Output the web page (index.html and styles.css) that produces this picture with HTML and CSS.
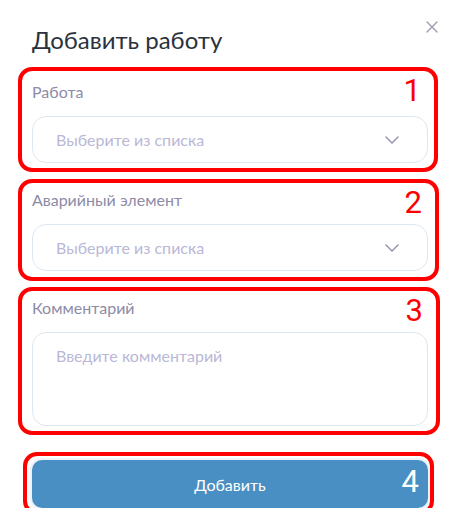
FILE: index.html
```html
<!DOCTYPE html>
<html lang="ru">
<head>
<meta charset="utf-8">
<title>Добавить работу</title>
<link rel="stylesheet" href="styles.css">
</head>
<body>
<div class="modal">
  <button class="close" aria-label="Закрыть">
    <svg width="12" height="12" viewBox="0 0 12 12"><path d="M1 1L11 11M11 1L1 11" stroke="#9c9db4" stroke-width="1.4" fill="none" stroke-linecap="round"/></svg>
  </button>
  <h1 class="title">Добавить работу</h1>

  <div class="field field-1">
    <div class="label">Работа</div>
    <div class="select">
      <span class="placeholder">Выберите из списка</span>
      <svg class="chevron" width="14" height="8" viewBox="0 0 14 8"><path d="M1 1L7 7L13 1" stroke="#8f8fab" stroke-width="1.4" fill="none" stroke-linecap="round" stroke-linejoin="round"/></svg>
    </div>
    <div class="mark mark-1"><span class="num">1</span></div>
  </div>

  <div class="field field-2">
    <div class="label">Аварийный элемент</div>
    <div class="select">
      <span class="placeholder">Выберите из списка</span>
      <svg class="chevron" width="14" height="8" viewBox="0 0 14 8"><path d="M1 1L7 7L13 1" stroke="#8f8fab" stroke-width="1.4" fill="none" stroke-linecap="round" stroke-linejoin="round"/></svg>
    </div>
    <div class="mark mark-2"><span class="num">2</span></div>
  </div>

  <div class="field field-3">
    <div class="label">Комментарий</div>
    <div class="textarea"><span class="placeholder">Введите комментарий</span></div>
    <div class="mark mark-3"><span class="num">3</span></div>
  </div>

  <div class="field field-4">
    <button class="submit">Добавить</button>
    <div class="mark mark-4"><span class="num num-4">4</span></div>
  </div>
</div>
</body>
</html>
```

FILE: styles.css
```css
html, body {
  margin: 0;
  padding: 0;
  background: #ffffff;
  font-family: Lato, "Open Sans", "Liberation Sans", sans-serif;
}

.modal {
  position: relative;
  width: 396px;
  padding: 25px 32px 0 32px;
}

.close {
  position: absolute;
  top: 21px;
  right: 22px;
  width: 12px;
  height: 12px;
  padding: 0;
  border: 0;
  background: none;
  display: flex;
}

.title {
  margin: 0 0 27px 0;
  font-size: 24px;
  line-height: 30px;
  font-weight: 400;
  color: #29323d;
}

.field {
  position: relative;
  display: flex;
  flex-direction: column;
}

.field-2, .field-3 {
  margin-top: 27px;
}

.field-4 {
  margin-top: 34px;
}

.label {
  font-size: 16px;
  line-height: 20px;
  color: #8d8ba7;
  margin-bottom: 14px;
}

.select {
  height: 47px;
  box-sizing: border-box;
  border: 1px solid #dde7ef;
  border-radius: 14px;
  display: flex;
  align-items: center;
  justify-content: space-between;
  padding: 0 28px 0 23px;
}

.placeholder {
  font-size: 16px;
  line-height: 20px;
  color: #bab8d7;
}

.textarea {
  height: 94px;
  box-sizing: border-box;
  border: 1px solid #dde7ef;
  border-radius: 14px;
  padding: 13px 23px;
}

.submit {
  height: 48px;
  border: 0;
  border-radius: 10px;
  background: #4a8fc4;
  color: #ffffff;
  font-family: inherit;
  font-size: 16px;
  box-shadow: 0 0 0 2px #eef3f9, 0 4px 10px rgba(74, 143, 196, 0.12);
}

.mark {
  position: absolute;
  border: 4px solid #ff0000;
  border-radius: 14px;
  pointer-events: none;
}

.mark-1 { top: -15px; bottom: -9px; left: -14px; right: -10px; }
.mark-2 { top: -11px; bottom: -10px; left: -14px; right: -11px; }
.mark-3 { top: -11px; bottom: -9px; left: -14px; right: -12px; }
.mark-4 { top: -8px; bottom: -7px; left: -9px; right: -6px; }

.num {
  position: absolute;
  top: 5px;
  right: 13px;
  font-family: Roboto, "Liberation Sans", sans-serif;
  font-weight: 400;
  font-size: 31px;
  line-height: 30px;
  color: #ff0000;
}

.num-4 {
  top: 11px;
  right: 11px;
  color: #ffffff;
}
```
